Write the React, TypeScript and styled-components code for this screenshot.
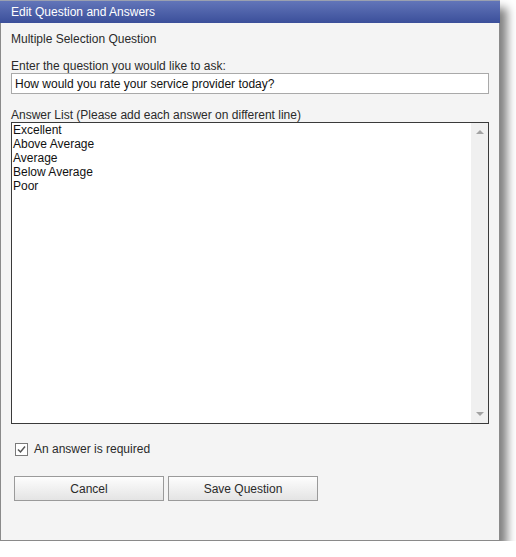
import React, { useState } from "react";
import styled, { createGlobalStyle } from "styled-components";

const Global = createGlobalStyle`
  html, body { margin: 0; padding: 0; background: #ffffff; }
  body { font-family: "Liberation Sans", Arial, sans-serif; }
`;

const Dialog = styled.div`
  box-sizing: border-box;
  width: 500px;
  height: 541px;
  background: #f4f4f4;
  border: 1px solid #8a8a8a;
  border-top: none;
  box-shadow: 7px 8px 9px rgba(0, 0, 0, 0.5);
  display: flex;
  flex-direction: column;
  font-family: "Liberation Sans", Arial, sans-serif;
  font-size: 12px;
  color: #2a2a2a;
`;

const TitleBar = styled.div`
  height: 23px;
  margin: 0 -1px;
  background: linear-gradient(#6275b9, #3b4f9a);
  border-top: 1px solid #9aa0b0;
  box-sizing: border-box;
  color: #ffffff;
  font-size: 12px;
  display: flex;
  align-items: center;
  padding-left: 11px;
`;

const Body = styled.div`
  display: flex;
  flex-direction: column;
  padding: 9px 10px 0 10px;
`;

const Label = styled.div<{ $gap?: number }>`
  line-height: 14px;
  margin-top: ${(p) => p.$gap ?? 0}px;
`;

const TextInput = styled.input`
  box-sizing: border-box;
  width: 478px;
  height: 21px;
  margin: 0;
  border: 1px solid #a9a9a9;
  background: #fff;
  padding: 0 3px;
  font-family: "Liberation Sans", Arial, sans-serif;
  font-size: 12px;
  color: #111;
  outline: none;
`;

const AreaWrap = styled.div`
  box-sizing: border-box;
  width: 478px;
  height: 302px;
  margin-top: 0;
  border: 1px solid #3a3a3a;
  background: #fff;
  display: flex;
`;

const Area = styled.textarea`
  flex: 1;
  border: none;
  resize: none;
  outline: none;
  margin: 0;
  padding: 0 1px;
  font-family: "Liberation Sans", Arial, sans-serif;
  font-size: 12px;
  line-height: 14px;
  color: #111;
  overflow: hidden;
`;

const ScrollTrack = styled.div`
  width: 17px;
  background: #f0f0f0;
  display: flex;
  flex-direction: column;
  justify-content: space-between;
  align-items: center;
  padding: 7px 0 7px 0;
`;

const Arrow = styled.div<{ $down?: boolean }>`
  width: 0;
  height: 0;
  border-left: 4px solid transparent;
  border-right: 4px solid transparent;
  ${(p) =>
    p.$down
      ? "border-top: 4px solid #a3a3a3;"
      : "border-bottom: 4px solid #a3a3a3;"}
`;

const CheckRow = styled.label`
  display: flex;
  align-items: center;
  gap: 6px;
  margin: 18px 0 0 4px;
  line-height: 14px;
`;

const Box = styled.span`
  box-sizing: border-box;
  width: 13px;
  height: 13px;
  border: 1px solid #7a7a7a;
  background: #fff;
  display: flex;
  align-items: center;
  justify-content: center;
`;

const ButtonRow = styled.div`
  display: flex;
  gap: 4px;
  margin: 20px 0 0 3px;
`;

const Button = styled.button`
  box-sizing: border-box;
  width: 150px;
  height: 25px;
  border: 1px solid #9a9a9a;
  background: linear-gradient(#fdfdfd, #e4e4e4);
  font-family: "Liberation Sans", Arial, sans-serif;
  font-size: 12px;
  color: #2a2a2a;
  padding: 0;
`;

export default function App() {
  const [q, setQ] = useState("How would you rate your service provider today?");
  const [a, setA] = useState("Excellent\nAbove Average\nAverage\nBelow Average\nPoor");
  return (
    <>
      <Global />
      <Dialog>
        <TitleBar>Edit Question and Answers</TitleBar>
        <Body>
          <Label>Multiple Selection Question</Label>
          <Label $gap={13}>Enter the question you would like to ask:</Label>
          <TextInput value={q} onChange={(e) => setQ(e.target.value)} />
          <Label $gap={14}>Answer List (Please add each answer on different line)</Label>
          <AreaWrap>
            <Area value={a} onChange={(e) => setA(e.target.value)} />
            <ScrollTrack>
              <Arrow />
              <Arrow $down />
            </ScrollTrack>
          </AreaWrap>
          <CheckRow>
            <Box>
              <svg width="9" height="9" viewBox="0 0 9 9">
                <path d="M1 4.5 L3.5 7 L8 1.5" fill="none" stroke="#555" strokeWidth="1.5" />
              </svg>
            </Box>
            An answer is required
          </CheckRow>
          <ButtonRow>
            <Button>Cancel</Button>
            <Button>Save Question</Button>
          </ButtonRow>
        </Body>
      </Dialog>
    </>
  );
}
